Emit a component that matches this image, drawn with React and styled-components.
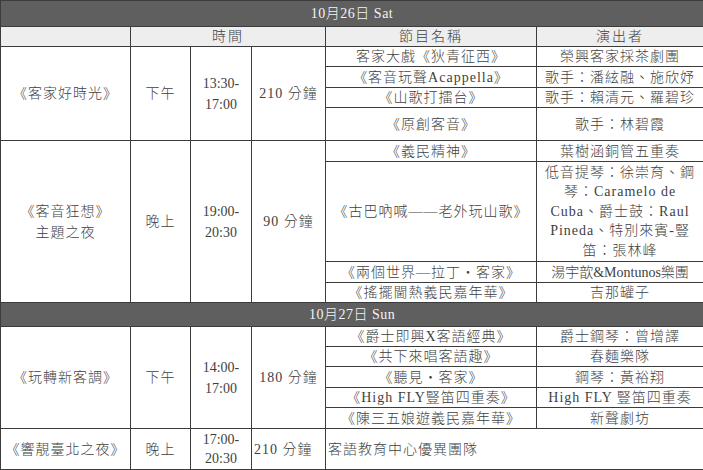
import React from 'react';
import styled, {createGlobalStyle} from "styled-components";

const GlobalStyle = createGlobalStyle`
  html, body {
    margin: 0;
    padding: 0;
    background: #ffffff;
  }
  body {
    font-family: "Liberation Serif", "Noto Sans CJK TC", serif;
  }
`;

const Table = styled.table`
  width: 703px;
  table-layout: fixed;
  border-collapse: collapse;
  font-size: 14px;
  font-weight: 300;
  color: #3f3f3f;
`;

const Row = styled.tr`
  height: ${props => props.h}px;
`;

const Cell = styled.td`
  border: 1px solid #3c3c3c;
  padding: 0 2px;
  text-align: ${props => props.align || "center"};
  vertical-align: middle;
  white-space: nowrap;
  line-height: ${props => props.lh || 17}px;
  letter-spacing: ${props => props.spaced ? "1px" : "0"};
`;

const HeadCell = styled(Cell)`
  background-color: #eeeeee;
  letter-spacing: 2px;
`;

const BandCell = styled.td`
  border: 1px solid #3c3c3c;
  background-color: #5f5f5f;
  color: #f4f4f4;
  text-align: center;
  vertical-align: middle;
  line-height: 18px;
  letter-spacing: 0.5px;
`;

const Band = ({label, h}) => (
    <Row h={h}>
        <BandCell colSpan={6}>{label}</BandCell>
    </Row>
);

export default function App() {
    return (
        <>
            <GlobalStyle/>
            <Table>
                <colgroup>
                    <col style={{width: 130}}/>
                    <col style={{width: 60}}/>
                    <col style={{width: 61}}/>
                    <col style={{width: 74}}/>
                    <col style={{width: 211}}/>
                    <col style={{width: 167}}/>
                </colgroup>
                <tbody>
                <Band label="10月26日 Sat" h={26}/>
                <Row h={20}>
                    <HeadCell/>
                    <HeadCell colSpan={3}>時間</HeadCell>
                    <HeadCell>節目名稱</HeadCell>
                    <HeadCell>演出者</HeadCell>
                </Row>

                <Row h={20}>
                    <Cell rowSpan={4} spaced>《客家好時光》</Cell>
                    <Cell rowSpan={4} spaced>下午</Cell>
                    <Cell rowSpan={4} lh={21}>13:30-<br/>17:00</Cell>
                    <Cell rowSpan={4} spaced>210 分鐘</Cell>
                    <Cell spaced>客家大戲《狄青征西》</Cell>
                    <Cell spaced>榮興客家採茶劇團</Cell>
                </Row>
                <Row h={21}>
                    <Cell spaced>《客音玩聲Acappella》</Cell>
                    <Cell spaced>歌手：潘絃融、施欣妤</Cell>
                </Row>
                <Row h={20}>
                    <Cell spaced>《山歌打擂台》</Cell>
                    <Cell spaced>歌手：賴清元、羅碧珍</Cell>
                </Row>
                <Row h={33}>
                    <Cell spaced>《原創客音》</Cell>
                    <Cell spaced>歌手：林碧霞</Cell>
                </Row>

                <Row h={21}>
                    <Cell rowSpan={4} spaced lh={21}>《客音狂想》<br/>主題之夜</Cell>
                    <Cell rowSpan={4} spaced>晚上</Cell>
                    <Cell rowSpan={4} lh={21}>19:00-<br/>20:30</Cell>
                    <Cell rowSpan={4} spaced>90 分鐘</Cell>
                    <Cell spaced>《義民精神》</Cell>
                    <Cell spaced>葉樹涵銅管五重奏</Cell>
                </Row>
                <Row h={100}>
                    <Cell spaced>《古巴吶喊——老外玩山歌》</Cell>
                    <Cell spaced lh={19.5}>
                        低音提琴：徐崇育、鋼<br/>
                        琴：Caramelo de<br/>
                        Cuba、爵士鼓：Raul<br/>
                        Pineda、特別來賓-豎<br/>
                        笛：張林峰
                    </Cell>
                </Row>
                <Row h={21}>
                    <Cell spaced>《兩個世界—拉丁‧客家》</Cell>
                    <Cell>湯宇歆&amp;Montunos樂團</Cell>
                </Row>
                <Row h={20}>
                    <Cell spaced>《搖擺閫熱義民嘉年華》</Cell>
                    <Cell spaced>吉那罐子</Cell>
                </Row>

                <Band label="10月27日 Sun" h={24}/>

                <Row h={20}>
                    <Cell rowSpan={5} spaced>《玩轉新客調》</Cell>
                    <Cell rowSpan={5} spaced>下午</Cell>
                    <Cell rowSpan={5} lh={21}>14:00-<br/>17:00</Cell>
                    <Cell rowSpan={5} spaced>180 分鐘</Cell>
                    <Cell spaced>《爵士即興X客語經典》</Cell>
                    <Cell spaced>爵士鋼琴：曾增譯</Cell>
                </Row>
                <Row h={20}>
                    <Cell spaced>《共下來唱客語趣》</Cell>
                    <Cell spaced>春麵樂隊</Cell>
                </Row>
                <Row h={21}>
                    <Cell spaced>《聽見‧客家》</Cell>
                    <Cell spaced>鋼琴：黃裕翔</Cell>
                </Row>
                <Row h={20}>
                    <Cell spaced>《High FLY豎笛四重奏》</Cell>
                    <Cell spaced>High FLY 豎笛四重奏</Cell>
                </Row>
                <Row h={21}>
                    <Cell spaced>《陳三五娘遊義民嘉年華》</Cell>
                    <Cell spaced>新聲劇坊</Cell>
                </Row>

                <Row h={41}>
                    <Cell spaced>《響靚臺北之夜》</Cell>
                    <Cell spaced>晚上</Cell>
                    <Cell lh={19}>17:00-<br/>20:30</Cell>
                    <Cell align="left" spaced>210 分鐘</Cell>
                    <Cell colSpan={2} align="left" spaced>客語教育中心優異團隊</Cell>
                </Row>
                </tbody>
            </Table>
        </>
    );
}
